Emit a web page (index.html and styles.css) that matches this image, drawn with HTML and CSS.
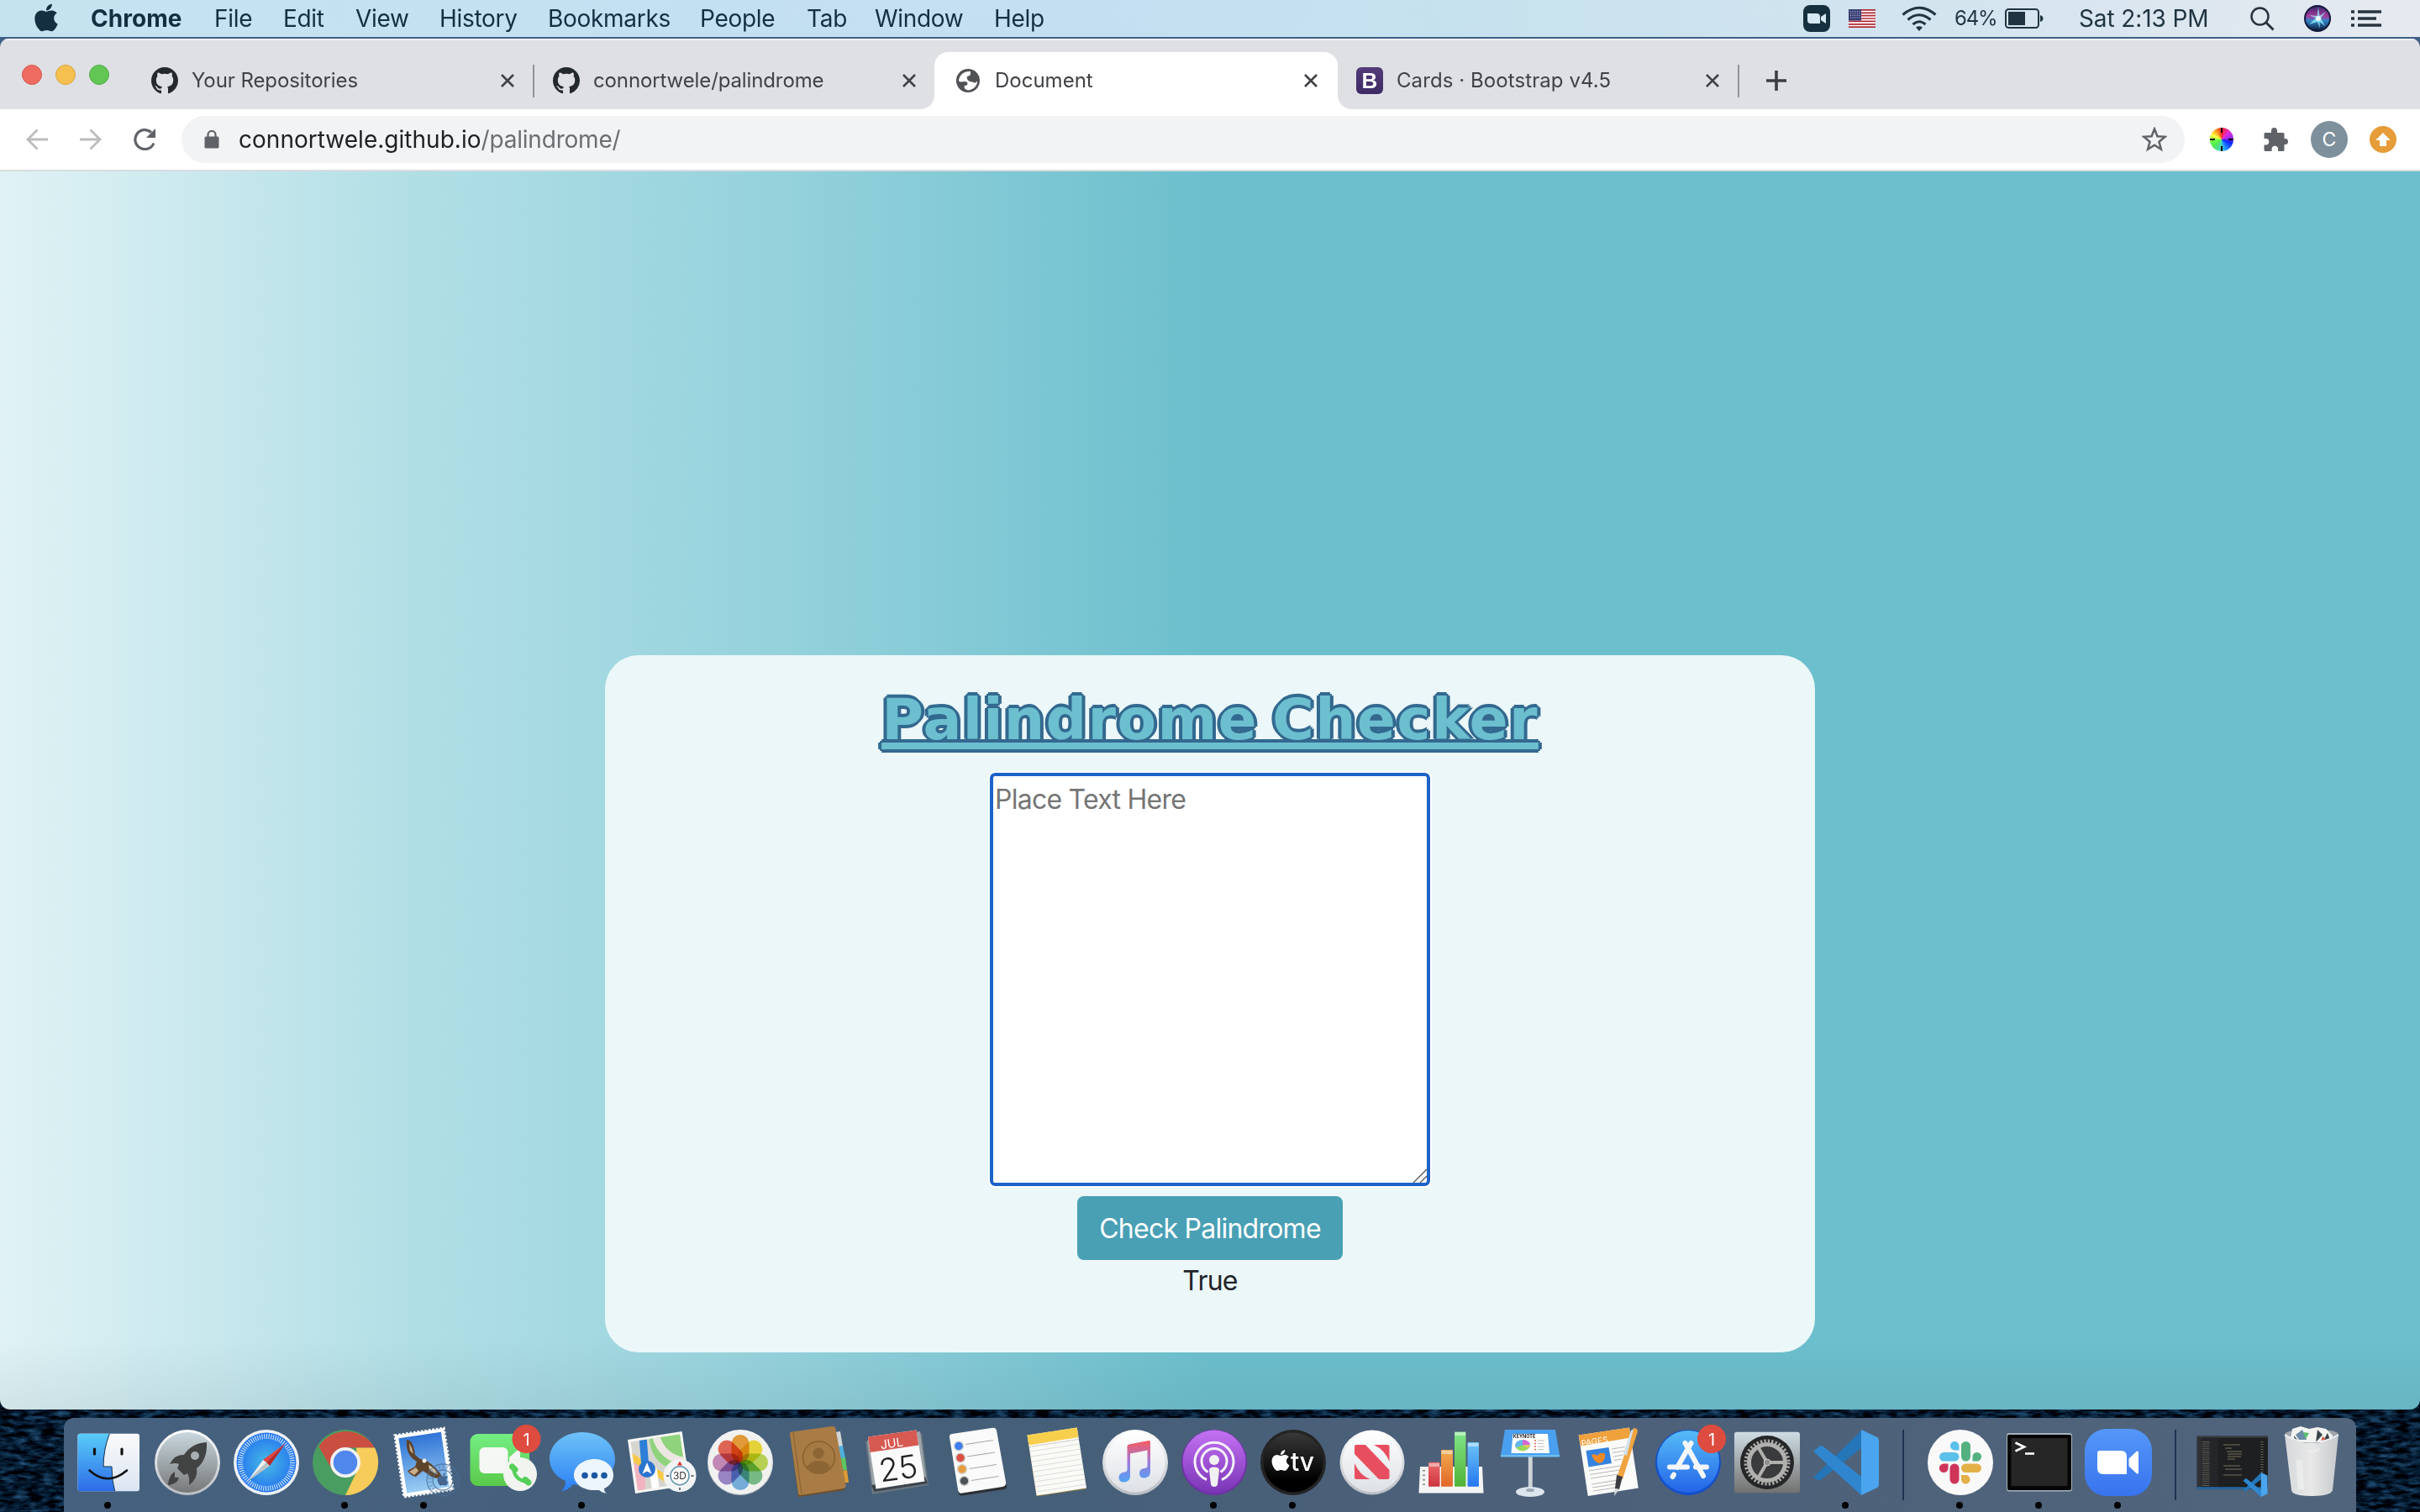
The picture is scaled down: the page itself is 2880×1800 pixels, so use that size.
FILE: index.html
```
<!DOCTYPE html>
<html lang="en">
<head>
<meta charset="utf-8">
<title>Document</title>
<link rel="stylesheet" href="styles.css">
</head>
<body>
<svg class="defs" width="0" height="0">
  <defs>
    <symbol id="apple" viewBox="0 0 170 170"><path fill="currentColor" d="M150.400 130.300c-2.500 5.700-5.400 10.900-8.700 15.700-4.600 6.500-8.300 11-11.200 13.500-4.500 4.100-9.300 6.200-14.400 6.400-3.700 0-8.100-1-13.300-3.200-5.200-2.100-9.900-3.200-14.300-3.200-4.600 0-9.500 1.100-14.800 3.200-5.300 2.100-9.500 3.300-12.800 3.400-4.900.2-9.800-2-14.700-6.500-3.100-2.700-7.100-7.400-11.800-14-5.100-7.100-9.200-15.400-12.500-24.800-3.500-10.200-5.200-20-5.200-29.600 0-10.900 2.400-20.400 7.100-28.300 3.700-6.300 8.600-11.300 14.800-14.900 6.200-3.700 12.800-5.500 20-5.700 3.900 0 9.100 1.200 15.500 3.600 6.400 2.400 10.500 3.600 12.300 3.600 1.300 0 5.900-1.400 13.600-4.200 7.300-2.600 13.400-3.700 18.400-3.300 13.600 1.100 23.800 6.500 30.600 16.100-12.200 7.400-18.200 17.700-18.100 31 .1 10.300 3.900 18.900 11.200 25.700 3.300 3.200 7 5.600 11.200 7.400-.9 2.600-1.800 5.100-2.900 7.600zM119.200 7.200c0 8.100-3 15.700-8.900 22.700-7.100 8.300-15.700 13.100-25.100 12.400-.1-1-.2-2-.2-3.100 0-7.800 3.400-16.100 9.400-22.900 3-3.400 6.800-6.300 11.400-8.600 4.600-2.200 9-3.500 13.100-3.700.1 1.100.2 2.200.2 3.200z"/></symbol>
    <symbol id="octocat" viewBox="0 0 16 16"><path fill="#24292e" d="M8 0C3.580 0 0 3.580 0 8c0 3.540 2.290 6.530 5.470 7.590.4.070.55-.17.55-.38 0-.19-.01-.82-.01-1.490-2.010.37-2.530-.49-2.690-.94-.09-.23-.48-.94-.82-1.130-.28-.15-.68-.52-.01-.53.63-.01 1.080.58 1.230.82.72 1.210 1.870.87 2.330.66.070-.52.28-.87.51-1.070-1.780-.2-3.640-.89-3.640-3.950 0-.87.31-1.590.82-2.150-.08-.2-.36-1.020.08-2.120 0 0 .67-.21 2.200.82.64-.18 1.320-.27 2-.27s1.360.09 2 .27c1.530-1.040 2.200-.82 2.200-.82.44 1.100.16 1.920.08 2.120.51.56.82 1.270.82 2.150 0 3.070-1.870 3.750-3.650 3.950.29.25.54.73.54 1.480 0 1.070-.01 1.930-.01 2.200 0 .21.15.46.55.38A8.010 8.010 0 0 0 16 8c0-4.420-3.580-8-8-8z"/></symbol>
    <symbol id="close" viewBox="0 0 18 18"><path d="M2 2 16 16M16 2 2 16" stroke="#3f4145" stroke-width="2.600" fill="none"/></symbol>
    <symbol id="code" viewBox="0 0 78 78"><path fill="#2476b9" d="M0 57 57 1V22L9 59.500Q6 61 4 59Z"/><path fill="#2f86cf" d="M0 26 7 20Q9 18 12 20L57 56V78Z"/><path fill="#4aa5ee" d="M57 0 76 9Q78 10 78 13V65Q78 68 76 69L57 78Z"/></symbol>
    <linearGradient id="white" x2="0" y2="1"><stop stop-color="#fff"/><stop offset="1" stop-color="#dde0e5"/></linearGradient>
    <linearGradient id="rim" x2="0" y2="1"><stop stop-color="#fff"/><stop offset="1" stop-color="#b8bdc3"/></linearGradient>
    <linearGradient id="blue" x2="0" y2="1"><stop stop-color="#56bcf8"/><stop offset="1" stop-color="#2364e8"/></linearGradient>
    <linearGradient id="finderL" x2="0" y2="1"><stop stop-color="#59ccf8"/><stop offset="1" stop-color="#2d6ce8"/></linearGradient>
    <linearGradient id="finderR" x2="0" y2="1"><stop stop-color="#fafafa"/><stop offset="1" stop-color="#dbe5f3"/></linearGradient>
    <linearGradient id="rocket" x2="0" y2="1"><stop stop-color="#c9d8df"/><stop offset="1" stop-color="#777878"/></linearGradient>
    <radialGradient id="compass"><stop stop-color="#48bbe6"/><stop offset="1" stop-color="#2474ef"/></radialGradient>
    <linearGradient id="green" x2="0" y2="1"><stop stop-color="#74ee84"/><stop offset="1" stop-color="#5ac949"/></linearGradient>
    <linearGradient id="msg" x2="0" y2="1"><stop stop-color="#6ec2f8"/><stop offset="1" stop-color="#2b80f5"/></linearGradient>
    <linearGradient id="note" x2="0" y2="1"><stop stop-color="#f65b60"/><stop offset=".5" stop-color="#a278d8"/><stop offset="1" stop-color="#4ea4f5"/></linearGradient>
    <linearGradient id="purple" x2="0" y2="1"><stop stop-color="#c471f3"/><stop offset="1" stop-color="#7935b5"/></linearGradient>
    <linearGradient id="black" x2="0" y2="1"><stop stop-color="#383838"/><stop offset=".8" stop-color="#000"/></linearGradient>
    <linearGradient id="metal" x2="0" y2="1"><stop stop-color="#cfdde4"/><stop offset="1" stop-color="#727170"/></linearGradient>
    <linearGradient id="sky" x2="0" y2="1"><stop stop-color="#2f74d6"/><stop offset="1" stop-color="#9bcdf3"/></linearGradient>
    <linearGradient id="zoomBg" x2="0" y2="1"><stop stop-color="#5597f9"/><stop offset="1" stop-color="#3873ee"/></linearGradient>
    <linearGradient id="bin" x2="1" y2="0"><stop stop-color="#d6d8da"/><stop offset=".5" stop-color="#e8e8e8"/><stop offset="1" stop-color="#c5c8cb"/></linearGradient>
    <linearGradient id="barR" x2="0" y2="1"><stop stop-color="#ea6a6a"/><stop offset="1" stop-color="#cd3440"/></linearGradient>
    <linearGradient id="barO" x2="0" y2="1"><stop stop-color="#f0ab4e"/><stop offset="1" stop-color="#e2672a"/></linearGradient>
    <linearGradient id="barG" x2="0" y2="1"><stop stop-color="#7fe58a"/><stop offset="1" stop-color="#51b335"/></linearGradient>
    <linearGradient id="barB" x2="0" y2="1"><stop stop-color="#6cc5f8"/><stop offset="1" stop-color="#2577ef"/></linearGradient>
    <linearGradient id="siri" x2="0" y2="1"><stop stop-color="#3b2a6e"/><stop offset=".4" stop-color="#a83a9c"/><stop offset=".6" stop-color="#2f86c8"/><stop offset="1" stop-color="#0f1a3c"/></linearGradient>
  </defs>
</svg>

<header class="menubar">
  <nav class="menus">
    <svg class="apple"><use href="#apple"/></svg>
    <b>Chrome</b><span>File</span><span>Edit</span><span>View</span><span>History</span><span>Bookmarks</span><span>People</span><span>Tab</span><span>Window</span><span>Help</span>
  </nav>
  <div class="status">
    <svg class="s-zoom" width="32" height="32" viewBox="0 0 32 32"><rect width="32" height="32" rx="8" fill="#17303f"/><path fill="#d6e8f1" d="M5 10h11q4 0 4 4v8H9q-4 0-4-4zM21 14l6-4v12l-6-4z"/></svg>
    <svg class="s-flag" width="32" height="22" viewBox="0 0 32 22"><path fill="#fff" d="M0 0h32v22H0z"/><path stroke="#b02a33" stroke-width="1.700" d="M0 .9h32M0 4.300h32M0 7.700h32M0 11h32M0 14.400h32M0 17.800h32M0 21.100h32"/><path fill="#3a3f74" d="M0 0h15v13.500H0z"/><path stroke="#c3c6dc" stroke-width="1" stroke-dasharray="1 1.600" d="M2 2.500h12M2 5h12M2 7.500h12M2 10h12"/></svg>
    <svg class="s-wifi" width="42" height="30" viewBox="0 0 42 30" fill="none" stroke="#1f3440" stroke-width="3"><path d="M1.500 10.500Q21-6 40.500 10.500M7.500 16.500Q21 5 34.500 16.500M13.500 22Q21 15.500 28.500 22"/><path fill="#1f3440" stroke="none" d="M17 25.500q4-2.500 8 0l-4 4.500z"/></svg>
    <span class="s-pct">64%</span>
    <svg class="s-bat" width="46" height="24" viewBox="0 0 46 24"><rect x="1" y="1" width="39" height="22" rx="3.500" fill="none" stroke="#1f3440" stroke-width="2"/><path fill="#1f3440" d="M4 4h20v16H4zM42 8q3.500 1 3.500 4T42 16z"/></svg>
    <span class="s-time">Sat 2:13 PM</span>
    <svg class="s-search" width="29" height="29" viewBox="0 0 29 29" fill="none" stroke="#27333e" stroke-width="2.500"><circle cx="11.500" cy="11.500" r="10"/><path d="M18.500 18.500 27.500 27.500" stroke-width="3"/></svg>
    <svg class="s-siri" width="32" height="32" viewBox="0 0 32 32"><circle cx="16" cy="16" r="16" fill="#10183a"/><circle cx="16" cy="16" r="14" fill="url(#siri)"/><path d="M17 2 18.500 13 26 8 20 15.500 25 25 18.500 20 19 28 16 20 6 23 14 15.500 6 12 15.500 13Z" fill="#8fe9f2" opacity=".8"/><circle cx="17" cy="16" r="3" fill="#e6fbff"/></svg>
    <svg class="s-list" width="36" height="20" viewBox="0 0 36 20" stroke="#27333e" stroke-width="3.600"><path d="M0 2h4M8 2h28M0 10h4M8 10h22M0 18h4M8 18h28"/></svg>
  </div>
</header>

<main class="window">
  <div class="tabstrip">
    <div class="lights"><i class="red"></i><i class="amber"></i><i class="lime"></i></div>
    <div class="tab first"><svg width="32" height="32"><use href="#octocat"/></svg><span class="t1">Your Repositories</span><svg class="x" width="18" height="18"><use href="#close"/></svg></div>
    <div class="tab second"><svg width="32" height="32"><use href="#octocat"/></svg><span class="t2">connortwele/palindrome</span><svg class="x" width="18" height="18"><use href="#close"/></svg></div>
    <div class="tab active"><svg width="28" height="28" viewBox="0 0 28 28"><circle cx="14" cy="14" r="14" fill="#505256"/><path fill="#fff" d="M17 3C9 2 3 8 3 14.500L5 15.500 11 15q2.500.5 2.500 2.500T10 20l-.5 2q1 3 5 3.500C20 25 25.500 20 25 14.500q-2 3-4.500 1.500L15 14.500q-3-2.500-2-5.500l3-1q1.500-2 1-5z"/></svg><span class="t3">Document</span><svg class="x" width="18" height="18"><use href="#close"/></svg></div>
    <div class="tab last"><span class="boot">B</span><span class="t4">Cards · Bootstrap v4.5</span><svg class="x" width="18" height="18"><use href="#close"/></svg></div>
    <svg class="plus" width="24" height="24" viewBox="0 0 24 24"><path d="M12 0v24M0 12h24" stroke="#3c3e42" stroke-width="3.600"/></svg>
  </div>
  <div class="toolbar">
    <svg width="26" height="26" viewBox="0 0 26 26" fill="none" stroke="#babcbe" stroke-width="2.800"><path d="M26 13H2M13.500 1.500 2 13 13.500 24.500"/></svg>
    <svg class="fwd" width="26" height="26" viewBox="0 0 26 26" fill="none" stroke="#babcbe" stroke-width="2.800"><path d="M0 13h24M12.500 1.500 24 13 12.500 24.500"/></svg>
    <svg class="reload" width="28" height="26" viewBox="0 0 28 26"><path d="M25 17.500A11.500 11.500 0 1 1 22 4.500" fill="none" stroke="#5f6368" stroke-width="3.200"/><path fill="#5f6368" d="M27 0v11H16z"/></svg>
    <div class="omnibox">
      <svg width="18" height="22" viewBox="0 0 18 22"><path fill="#5f6368" d="M2 7.500h14q1.500 0 1.500 1.500v11q0 1.500-1.500 1.500H2Q.5 21.500.5 20V9Q.5 7.500 2 7.500z"/><path d="M4.500 8V5.500a4.500 4.500 0 0 1 9 0V8" fill="none" stroke="#5f6368" stroke-width="2.200"/></svg>
      <span class="url">connortwele.github.io<em>/palindrome/</em></span>
      <svg class="star" width="30" height="30" viewBox="0 0 30 30"><path d="M15 2.500 18.400 11.300 27.700 11.800 20.500 17.700 22.900 26.800 15 21.700 7.100 26.800 9.500 17.700 2.300 11.800 11.600 11.300Z" fill="none" stroke="#5f6368" stroke-width="2.500"/></svg>
    </div>
    <div class="wheel"></div>
    <svg class="puzzle" width="30" height="30" viewBox="0 0 30 30"><path fill="#5f6368" d="M2 7h8V4.500a3.500 3.500 0 0 1 7 0V7h7q1.500 0 1.500 1.500V14h1a3.500 3.500 0 0 1 0 7h-1v6.500q0 1.500-1.500 1.500h-6v-2.500a3.700 3.700 0 0 0-7.400 0V29H3q-1.500 0-1.500-1.500v-6h2a3.500 3.500 0 0 0 0-7.500h-2V8.500Z"/></svg>
    <span class="avatar">C</span>
    <svg class="up" width="32" height="32" viewBox="0 0 32 32"><circle cx="16" cy="16" r="16" fill="#e69c38"/><path fill="#fff" d="M16 8l9 9h-5v7h-8v-7H7z"/></svg>
  </div>
  <section class="page">
    <div class="card">
      <h1>Palindrome Checker</h1>
      <div class="field"><span>Place Text Here</span><svg width="18" height="18" viewBox="0 0 18 18"><path d="M2 18 18 2M10 18 18 10" stroke="#555" stroke-width="1.300"/></svg></div>
      <div class="btn">Check Palindrome</div>
      <p>True</p>
    </div>
  </section>
</main>

<div class="desktop">
  <svg class="sea" width="2880" height="134"><filter id="waves" x="0" y="0" width="1" height="1" color-interpolation-filters="sRGB"><feTurbulence type="fractalNoise" baseFrequency=".06 .2" numOctaves="4" seed="4"/><feColorMatrix values="0.35 0 0 0 -.16  0.6 0 0 0 -.2  0.8 0 0 0 -.22  0 0 0 0 1"/></filter><rect width="2880" height="134" filter="url(#waves)"/></svg>
  <footer class="dock">
    <svg viewBox="0 0 94 112"><rect x="10.500" y="18.700" width="73.500" height="68.500" rx="3" fill="url(#finderR)"/><path fill="url(#finderL)" d="M48.300 18.700Q41 38 41 58h10q0 16 3.600 29.200H13.500q-3 0-3-3V21.700q0-3 3-3z"/><path d="M48.300 18.700Q41 38 41 58h10q0 16 3.600 29" fill="none" stroke="#12304c" stroke-width="1"/><path d="M30.500 37v6M63 37v6" stroke="#111" stroke-width="3.200" stroke-linecap="round"/><path d="M24.500 62.500Q46 82 69 62.500" fill="none" stroke="#111" stroke-width="2.600" stroke-linecap="round"/><circle class="dot" cx="46" cy="104" r="4"/></svg>
    <svg viewBox="0 0 94 112"><circle cx="47" cy="53" r="39" fill="url(#rim)"/><circle cx="47" cy="53" r="36" fill="url(#rocket)"/><path fill="#424343" d="M70 29Q52 30 43 44q-11-1-17 11 7-2 11 0l-2 5 8 8 4-2q3 4 2 14 11-8 9-20 13-10 12-31z"/><path fill="#424343" d="M32 64q-7 4-8 16 11-1 13-9l-5 0z"/><circle cx="56" cy="45" r="5" fill="#a8b0b4"/></svg>
    <svg viewBox="0 0 94 112"><circle cx="47" cy="53" r="39" fill="#eef1f4"/><circle cx="47" cy="53" r="35.500" fill="url(#compass)"/><circle cx="47" cy="53" r="31" fill="none" stroke="#d8ecfb" stroke-width="6" stroke-dasharray="1 1.700"/><path fill="#e8453c" d="M70 30 43 50 47 53Z"/><path fill="#b92a28" d="M70 30 47 53 51 57Z"/><path fill="#f0f0f0" d="M24 76 43 50 47 53Z"/><path fill="#c0c3c6" d="M24 76 47 53 51 57Z"/></svg>
    <svg viewBox="0 0 94 112"><circle cx="47" cy="53" r="39" fill="#4a9d60"/><path fill="#ca4f41" d="M15.300 34A39 39 0 0 1 82 35.500H47L32 63Z"/><path fill="#f7cc5a" d="M82 35.500A39 39 0 0 1 47 92L62 61 60 35.500Z"/><circle cx="47" cy="53" r="18" fill="#f3f3f3"/><circle cx="47" cy="53" r="14.300" fill="#4f87ed"/><circle class="dot" cx="46" cy="104" r="4"/></svg>
    <svg viewBox="0 0 94 112"><g transform="rotate(-8.500 47 53)"><rect x="17" y="16" width="59" height="74" fill="#fff"/><rect x="17" y="16" width="59" height="74" fill="none" stroke="#fff" stroke-width="3" stroke-dasharray="2.500 2"/><rect x="21" y="20" width="51" height="66" fill="url(#sky)"/></g><path fill="#5f442c" d="M26 26Q34 26 36 44L42 49 48 50Q62 58 69 71 58 74 50 66L45 63 37 70Q31 69 27 63L36 58 38 52Q24 44 26 26z"/><path fill="#c9b08c" d="M29 30q4 6 5 13l-4-4zM29 64l8-5 3 4-5 5z"/><path fill="#d9c9ac" d="M52 56q7 3 11 11-6-1-10-6z"/><circle cx="47" cy="51" r="2.500" fill="#f1eee6"/><g fill="none" stroke="#4a6d96" stroke-width="1.300" opacity=".75"><circle cx="69" cy="74" r="19"/><circle cx="69" cy="74" r="12"/></g><circle cx="69" cy="74" r="15.500" fill="none" stroke="#4a6d96" stroke-width="4" stroke-dasharray="2 2.500" opacity=".4"/><svg x="61" y="64" width="16" height="18" color="#45678f"><use href="#apple"/></svg><circle class="dot" cx="46" cy="104" r="4"/></svg>
    <svg viewBox="0 0 94 112"><rect x="7.500" y="19" width="70.500" height="62" rx="9" fill="url(#green)"/><rect x="18.500" y="35" width="34" height="31" rx="6" fill="#f4f7f3"/><path fill="#f4f7f3" d="M54 47 63 39q4-2 4 2v20L54 58z"/><circle cx="67" cy="67" r="20" fill="#f1f4ef"/><path d="M59 59q1 15 16 17" fill="none" stroke="#55cf58" stroke-width="4"/><path d="M57.500 58 61 61.500M73 73.500 77 77" stroke="#55cf58" stroke-width="7" stroke-linecap="round"/><circle cx="74.500" cy="25" r="17" fill="#de4b3f"/><text x="74.500" y="32.500" font-size="20" fill="#fff">1</text></svg>
    <svg viewBox="0 0 94 112"><path fill="url(#msg)" d="M47 17C69 17 86 31 86 49S69 80 47 80q-6 0-11-1-5 7-14 8 5-4 5-12C15 70 8 60 8 49 8 31 25 17 47 17z"/><path fill="#edf5fd" d="M61 49c13 0 23 8 23 19 0 7-4 13-11 16 0 3 1 5 3 6-4-1-7-2-9-4h-6C47 86 37 78 37 68s11-19 24-19z"/><g fill="#1c58a2"><circle cx="50" cy="68.500" r="3.800"/><circle cx="61.500" cy="68.500" r="3.800"/><circle cx="73" cy="68.500" r="3.800"/></g><circle class="dot" cx="46" cy="104" r="4"/></svg>
    <svg viewBox="0 0 94 112"><path fill="#f7f7f4" d="M7 26 71.600 16 81 80 16 90Z"/><clipPath id="mapClip"><path d="M10.500 28.500 69 19.500 77.500 77.500 19 86.500Z"/></clipPath><g clip-path="url(#mapClip)"><rect width="94" height="112" fill="#d6d5cf"/><path fill="#8fd37c" d="M32 18H75V60H60Q34 55 32 18z"/><path d="M40 20Q48 50 80 52" fill="none" stroke="#ece8e1" stroke-width="9"/><path fill="#f2b3c0" d="M8 50 28 60V90H12z"/><path d="M8 44 68 82" stroke="#f8c948" stroke-width="8"/><path d="M37 60 41 90" stroke="#fff" stroke-width="9"/><path d="M25 22 28 60" stroke="#2d7ed6" stroke-width="9"/></g><circle cx="30" cy="61" r="10" fill="#2c73cf"/><path fill="#fff" d="M30 53 35.500 66.500 30 63.500 24.500 66.500Z"/><circle cx="69" cy="68.700" r="19.500" fill="#f1f3f5"/><circle cx="69" cy="68.700" r="11" fill="#fff" stroke="#5e93ac" stroke-width="1.500"/><path fill="#df3029" d="M69 51.500 72 56.500H66Z"/><path d="M69 83v3M53 69h3M82.500 69h3" stroke="#444" stroke-width="1.500"/><text x="69" y="73" font-size="12" fill="#333">3D</text></svg>
    <svg viewBox="0 0 94 112"><circle cx="47" cy="53" r="39" fill="url(#rim)"/><circle cx="47" cy="53" r="38" fill="#f1f1f0"/><g class="petals"><rect x="36.500" y="20" width="21" height="33" rx="10.500" fill="#f0a23c"/><rect x="36.500" y="20" width="21" height="33" rx="10.500" fill="#f1e03c" transform="rotate(45 47 53)"/><rect x="36.500" y="20" width="21" height="33" rx="10.500" fill="#c0dc58" transform="rotate(90 47 53)"/><rect x="36.500" y="20" width="21" height="33" rx="10.500" fill="#7dc48c" transform="rotate(135 47 53)"/><rect x="36.500" y="20" width="21" height="33" rx="10.500" fill="#7cb6e6" transform="rotate(180 47 53)"/><rect x="36.500" y="20" width="21" height="33" rx="10.500" fill="#a08ccd" transform="rotate(225 47 53)"/><rect x="36.500" y="20" width="21" height="33" rx="10.500" fill="#ce8fc0" transform="rotate(270 47 53)"/><rect x="36.500" y="20" width="21" height="33" rx="10.500" fill="#ea6a57" transform="rotate(315 47 53)"/></g></svg>
    <svg viewBox="0 0 94 112"><path fill="#d2d5d6" d="M66 17 72 16 75 34H68z"/><path fill="#4eb1dd" d="M69 34 75 33 78 48H70z"/><path fill="#5dc760" d="M70 49 78 47 80 62H72z"/><path fill="#dc9b33" d="M73 63 80 62 82 77H75z"/><path fill="#6f4f27" d="M12 18 22 94 77 86V80z"/><path fill="#a97c45" d="M12 19Q12 16.500 14.500 16.500L62 10q4-.5 4.500 3L78.500 80q.5 3.500-3 4L25 92q-2.500.5-3-2z"/><path d="M16 17 26 91" stroke="#8c6435" stroke-width="1.200"/><circle cx="46.500" cy="47" r="19" fill="#a67a43" stroke="#86602f" stroke-width="1.400"/><circle cx="46" cy="42" r="6.500" fill="#8c6534"/><path fill="#8c6534" d="M32 59q4-8 14-8t14 7q-6 8-13 8t-15-7z"/></svg>
    <svg viewBox="0 0 94 112"><path fill="#68757e" d="M8 28 16 91 83 80 75 18z"/><path fill="#9aa5aa" d="M10 27 17 88 81 77 73 16z"/><path fill="#3c434a" d="M15 80 18 88 82 78 79 70z"/><path fill="#fafafa" d="M11 22.600 68.600 14.600 78.500 75.500 20.500 84.500Z"/><path fill="#d65a52" d="M11 22.600 68.600 14.600 71.200 32.500 13.500 41Z"/><g transform="rotate(-8 43 50)"><text x="42" y="35" font-size="14.500" fill="#fff">JUL</text><text x="45.500" y="74" font-size="38" font-weight="300" fill="#222">25</text></g></svg>
    <svg viewBox="0 0 94 112"><path fill="#2c2f33" d="M15 26 25 90Q26 93 29 92.500L79 85Q83 84 82 80z"/><path fill="#fafafa" d="M14 23q-.5-3.500 3-4L64 12q5-1 6 3l11 61q1 5-4 6L29 89.500q-4 1-5-4z"/><g stroke="#a5a5a5" stroke-width="1"><path d="M33 31.500 66 26.500M35 46 68 41M37.500 60.500 70 55.500M40 74.500 72.500 69.500"/></g><g stroke="#d4d4d4" stroke-width="1.500"><circle cx="25" cy="33.500" r="5.500" fill="#3d7df0"/><circle cx="27" cy="47.500" r="5.500" fill="#db4f43"/><circle cx="29" cy="61" r="5.500" fill="#e79d3e"/><circle cx="31.500" cy="75" r="5.500" fill="#4f5358"/></g></svg>
    <svg viewBox="0 0 94 112"><path fill="#8b7a3c" d="M13 24 23.500 93.500 83.500 84.500z"/><path fill="#fafaf6" d="M12.500 20.600 71.700 11.400 83 83.600 23.600 92.600Z"/><path fill="#f8cf4d" d="M12.500 20.600 71.700 11.400 73.500 23 14.500 32.500Z"/><path d="M15 34.500 73.500 25.500" stroke="#999" stroke-width=".7" stroke-dasharray="2 1"/><path d="M16 40 75 31M17 46 76 37M18 52 77 43M18.500 58 78 49M19.500 64 79 55M20.500 70 80 61M21.500 76 80.500 67M22 82 81.500 73M23 88 82.500 79" stroke="#d0d0d0" stroke-width=".7"/></svg>
    <svg viewBox="0 0 94 112"><circle cx="47" cy="53" r="39" fill="url(#rim)"/><circle cx="47" cy="53" r="35.500" fill="url(#white)"/><path fill="url(#note)" d="M37.500 34q0-2 2-2.500L63 27q2-.3 2 2v35q0 7-7 7.500-6 0-6-5.500t6-6q3.500-.5 3.500-3V38.500L41 42.500V69q0 7-7 7.500-6.500 0-6.500-5.500t6.500-6.500q3.500-.5 3.500-3z"/></svg>
    <svg viewBox="0 0 94 112"><circle cx="47" cy="53" r="39" fill="#7130a8"/><circle cx="47" cy="52" r="37.500" fill="url(#purple)"/><g fill="none" stroke="#f5f0f9" stroke-width="3"><path d="M38 73.500A23 23 0 1 1 56 73.500"/><path d="M39.500 64.500A15 15 0 1 1 54.500 64.500"/></g><circle cx="47" cy="50" r="6" fill="#f1f1f1"/><path fill="#f1f1f1" d="M41 62q0-3.500 6-3.500t6 3.500l-2 17q-.5 3-4 3t-4-3z"/><circle class="dot" cx="46" cy="104" r="4"/></svg>
    <svg viewBox="0 0 94 112"><circle cx="47" cy="53" r="39" fill="#242424"/><circle cx="47" cy="53" r="35.500" fill="url(#black)"/><svg x="19" y="37" width="26" height="27" color="#fff"><use href="#apple"/></svg><text x="58" y="63" font-size="30" font-weight="500" fill="#fff">tv</text><circle class="dot" cx="46" cy="104" r="4"/></svg>
    <svg viewBox="0 0 94 112"><circle cx="47" cy="53" r="38.500" fill="url(#rim)"/><circle cx="47" cy="53" r="35.500" fill="url(#white)"/><path fill="#e74f60" d="M26 34q0-2 2-2H39L67.500 62V71q0 2-2 2H55L26 43zM49 32H65.500q2 0 2 2V52Q62 38 49 32zM26 54Q32 68 44.500 73H28q-2 0-2-2z"/></svg>
    <svg viewBox="0 0 94 112"><path fill="#f4f4f4" d="M10 58H84L85.500 89.500H8.500Z"/><path d="M14.500 62v22" stroke="#888" stroke-width="3" stroke-dasharray="1.500 4"/><rect x="20" y="52.700" width="13.500" height="29" rx="1" fill="url(#barR)"/><rect x="35" y="38" width="14" height="43.700" rx="1" fill="url(#barO)"/><rect x="51" y="16.500" width="13.500" height="65.200" rx="1" fill="url(#barG)"/><rect x="66.500" y="29" width="13.500" height="52.700" rx="1" fill="url(#barB)"/><path d="M20.500 56h12.500M35.500 41h13M51.500 19h12.500M67 32h12.500" stroke="#fff" stroke-opacity=".45" stroke-width="4"/></svg>
    <svg viewBox="0 0 94 112"><path fill="#cdd3d8" d="M44.800 46h5v40h-5z"/><ellipse cx="47" cy="88" rx="17" ry="6" fill="#dce5ee"/><ellipse cx="47" cy="86" rx="5" ry="2" fill="#9ba7b4"/><path fill="#4a9fee" d="M17 14H77L82 44H12Z"/><path fill="#6dc0f3" d="M12 44H82V46.500H12Z"/><path fill="#fff" d="M26.500 19H68L70 42H24.500Z"/><text x="40" y="24" font-size="5.500" font-weight="700" fill="#222">KEYNOTE</text><ellipse cx="38" cy="32.500" rx="9" ry="6.500" fill="#64b7ec"/><path fill="#9ad95a" d="M38 32.500 30 35.500Q38 43 45 36z"/><path fill="#d867d2" d="M38 32.500V26Q46 26.500 47 31.500z"/><path fill="#f2c94a" d="M38 32.500 47 32 45 36z"/><path d="M52 27h2M52 30.500h2M52 34h2M52 37.500h2" stroke="#e06a58" stroke-width="1.500"/><path d="M56 27h8M56 30.500h7M56 34h8M56 37.500h7" stroke="#bbb" stroke-width="1"/></svg>
    <svg viewBox="0 0 94 112"><path fill="#fbfbfa" d="M10.700 20.600 71 11.400 81.800 83.600 21.800 93Z"/><path fill="#efa13c" d="M10.700 20.600 71 11.400 72.800 23.500 13 33.500Z"/><g transform="rotate(-8.500 30 27)"><text x="29.500" y="31.500" font-size="10" fill="#fff">PAGES</text></g><path fill="#3583e0" d="M19.500 39 46.500 35 50 54 22.500 58.500Z"/><path fill="#f18a24" d="M26 44q4-2 7 1 3-4 6-3 4-1 3 4-1 7-7 8-6-2-9-10z"/><path d="M50 37 66 34.500M51 41.500 66 39M52 46 64 44M53 50.500 62 49M23 63 60 57M24 67.500 59 62M25 72 58 67M26 79 57 74M27 83 56 78.500M28 87 54 83" stroke="#b0b0b0" stroke-width=".9"/><path fill="#f0a33f" d="M76 12q5 0 5 4L63 73 56 71Z"/><path fill="#cfe0ea" d="M73 15 76 13 68 45 64 43z"/><path fill="#3b3d40" d="M56 68 63 70 59 85 54 84z"/><path fill="#d5d7da" d="M54 84 59 85 53 93z"/></svg>
    <svg viewBox="0 0 94 112"><circle cx="47" cy="53" r="39" fill="#1450cc"/><circle cx="47" cy="52" r="37" fill="url(#blue)"/><g stroke="#f3f6fa" stroke-width="6" stroke-linecap="round"><path d="M50.500 30 34 59M43.500 30 65 69M25 58.500H46M56 58.500H69M30 67.500 28.500 70"/></g><circle cx="75" cy="25" r="17" fill="#de4b3f"/><text x="75" y="32.500" font-size="20" fill="#fff">1</text></svg>
    <svg viewBox="0 0 94 112"><rect x="8" y="16.700" width="78" height="72.500" rx="3" fill="url(#metal)"/><circle cx="47" cy="53" r="32" fill="#242628"/><circle cx="47" cy="53" r="25.500" fill="none" stroke="#a9a9a7" stroke-width="4" stroke-dasharray="2.400 2.050"/><circle cx="47" cy="53" r="21.500" fill="#3a3b3c" stroke="#b0b0ae" stroke-width="5"/><path d="M47 53H67M47 53 37 36M47 53 37 70" stroke="#b0b0ae" stroke-width="4"/><circle cx="47" cy="53" r="4" fill="#8f8f8e" stroke="#d0d0d0"/></svg>
    <svg viewBox="0 0 94 112"><use href="#code" x="8" y="14" width="78" height="78"/><circle class="dot" cx="46" cy="104" r="4"/></svg>
    <i class="rule"></i>
    <svg viewBox="0 0 94 112"><circle cx="47" cy="53" r="39" fill="#f9f9f9"/><g fill="#5bc0ea"><rect x="22" y="41" width="23.500" height="10.500" rx="5.250"/><path d="M45.500 38.500H39.500a5.300 5.300 0 1 1 6-5.300z"/></g><g fill="#54b080"><rect x="48" y="28" width="11" height="23.500" rx="5.500"/><path d="M61.500 51.500V46a5.300 5.300 0 1 1 5.300 5.500z"/></g><g fill="#cf3459"><rect x="34.500" y="54.500" width="11" height="24" rx="5.500"/><path d="M32.500 54.500V60a5.300 5.300 0 1 1-5.300-5.500z"/></g><g fill="#e3b048"><rect x="48" y="54.500" width="24" height="10.500" rx="5.250"/><path d="M48 68H54a5.300 5.300 0 1 1-6 5.300z"/></g><circle class="dot" cx="46" cy="104" r="4"/></svg>
    <svg viewBox="0 0 94 112"><rect x="8" y="18" width="78" height="69.500" rx="3" fill="#a6b2b8"/><rect x="9" y="20" width="76" height="66" rx="2" fill="#050505"/><rect x="13.500" y="24" width="67" height="57" fill="#262626"/><path d="M18.500 29.500 29 34.500 18.500 39.500" fill="none" stroke="#fff" stroke-width="2.600"/><path d="M30 42.500H41" stroke="#fff" stroke-width="2.600"/><circle class="dot" cx="46" cy="104" r="4"/></svg>
    <svg viewBox="0 0 94 112"><rect x="7" y="13" width="80" height="80" rx="26" fill="url(#zoomBg)"/><path fill="#fff" d="M25 39H50q7 0 7 7V67H29q-7 0-7-7V42q0-3 3-3zM59.500 48.500 68.500 40q2.500-1.500 2.500 1V65q0 2.500-2.500 1L59.500 57.500z"/><circle class="dot" cx="46" cy="104" r="4"/></svg>
    <i class="rule"></i>
    <svg viewBox="0 0 94 112"><rect x="4.700" y="21.700" width="84.300" height="63" fill="#1e1f21"/><rect x="4.700" y="21.700" width="84.300" height="2" fill="#3a3c3f"/><rect x="4.700" y="23.700" width="5" height="59" fill="#303236"/><rect x="9.700" y="23.700" width="20" height="59" fill="#252629"/><rect x="4.700" y="82.500" width="84.300" height="2" fill="#2179c4"/><path d="M15 28v54" stroke="#77736a" stroke-width="9" stroke-dasharray="1 1.600" opacity=".7"/><path d="M36 32h20M38 36h8M40 40h18M41 43h17M41 46h16M41 49h9M36 57h20M38 61h20M36 68h22" stroke="#76715a" stroke-width="1"/><path d="M82 28v46" stroke="#696859" stroke-width="3" stroke-dasharray="1 2"/><use href="#code" x="59" y="65" width="30" height="29"/></svg>
    <svg viewBox="0 0 94 112"><ellipse cx="47" cy="20" rx="32" ry="7" fill="#9fa6ac"/><path fill="#f3f3f1" d="M22 24 24 13 34 10 44 13 54 11 64 13 72 21 70 29H27z"/><path fill="#6c8ba8" d="M28 20 36 14 41 26H32z"/><path fill="#55c06a" d="M37 17 44 18 40 25z"/><path fill="#39434c" d="M54 14 60 20 52 29zM66 18 69 26 61 27zM26 21 31 27 27 28z"/><path fill="#d35f44" d="M60 22 64 25 58 28z"/><path fill="url(#bin)" d="M15 20Q30 30 47 30T79 20L72 86Q70 93 47 93T23 86Z"/><path fill="#fff" opacity=".35" d="M37 35q10 8 20 0-5 13-20 0zM28 50h8l2 35h-7z"/><path d="M15 20Q30 29 47 29T79 20" fill="none" stroke="#eef0f1" stroke-width="1.500"/></svg>
  </footer>
</div>
</body>
</html>
```
FILE: styles.css
```
* { box-sizing: border-box; }
body { margin: 0; width: 2880px; height: 1800px; overflow: hidden; display: flex; flex-direction: column; background: #3f6084; font-family: Inter, "Liberation Sans", sans-serif; }
svg { display: block; flex: none; }
.defs { position: absolute; }

.menubar { height: 44px; flex: none; display: flex; justify-content: space-between; background: linear-gradient(90deg, #c5e3ef 0%, #c3e0f2 30%, #c4dff1 45%, #c7e2ee 62%, #d3e4ef 80%, #e6eaf0 100%); color: #132f40; font-size: 28px; line-height: 44px; letter-spacing: -.3px; white-space: nowrap; }
.menus { display: grid; padding-left: 38px; grid-template-columns: 70px 147px 82px 86px 100px 129px 181px 127px 81px 142px 80px; }
.menus b { letter-spacing: .05px; }
.apple { width: 34px; height: 34px; margin: 4px 0 0; }
.status { display: flex; align-items: center; color: #1f3440; padding-right: 46px; }
.s-flag { margin-left: 22px; }
.s-wifi { margin-left: 31px; }
.s-pct { font-size: 24px; width: 60px; margin-left: 21px; letter-spacing: -1.200px; }
.s-time { margin: 0 0 0 42px; width: 204px; letter-spacing: -.1px; }
.s-siri { margin-left: 35px; }
.s-list { margin-left: 24px; }

.window { height: 1632px; margin-top: 2px; flex: none; display: flex; flex-direction: column; border-radius: 10px 10px 12px 12px; overflow: hidden; position: relative; z-index: 1; }
.tabstrip { height: 84px; flex: none; display: flex; background: #dfe0e4; border-top: 2px solid #f0f1f3; font-size: 24px; color: #404246; }
.lights { display: flex; gap: 16px; padding: 29px 0 0 26px; width: 164px; }
.lights i { width: 24px; height: 24px; border-radius: 50%; }
.red { background: #ed6b60; border: 1px solid #d8564c; }
.amber { background: #f5c04f; border: 1px solid #dba43c; }
.lime { background: #62c655; border: 1px solid #4eab42; }
.tab { display: flex; align-items: center; height: 68px; margin-top: 14px; position: relative; white-space: nowrap; }
.tab span { line-height: 30px; }
.tab .x { margin-left: auto; }
.first { width: 472px; padding: 0 23px 0 16px; }
.second { width: 476px; padding: 0 21px 0 22px; }
.first::after, .last::after { content: ""; position: absolute; right: 0; top: 15px; width: 2px; height: 39px; background: #919397; }
.t1 { margin-left: 16px; letter-spacing: -.08px; }
.t2 { margin-left: 16px; letter-spacing: -.12px; }
.t3 { margin-left: 18px; }
.t4 { margin-left: 16px; letter-spacing: .08px; }
.active { width: 480px; background: #fff; border-radius: 16px 16px 0 0; padding: 0 23px 0 26px; }
.active::before, .active::after { content: ""; position: absolute; bottom: 0; width: 16px; height: 16px; background: radial-gradient(circle at 0 0, transparent 15.500px, #fff 16px); }
.active::before { left: -16px; }
.active::after { right: -16px; transform: scaleX(-1); }
.last { width: 478px; padding: 0 23px 0 22px; }
.boot { width: 32px; height: 32px; border-radius: 6px; background: linear-gradient(#543b79, #3c2a63); color: #fff; font: 700 26px/32px "Liberation Sans", sans-serif; text-align: center; }
.tab .boot { line-height: 32px; }
.plus { margin: 36px 0 0 32px; }

.toolbar { height: 74px; flex: none; display: flex; align-items: center; background: #fff; padding: 0 28px 0 31px; border-bottom: 2px solid #dadcde; }
.fwd { margin-left: 38px; }
.reload { margin-left: 37px; }
.omnibox { width: 2384px; height: 56px; border-radius: 28px; background: #f1f3f4; margin-left: 30px; padding: 0 21px 0 27px; display: flex; align-items: center; }
.url { margin-left: 23px; font-size: 28px; color: #202124; letter-spacing: .02px; }
.url em { font-style: normal; color: #6b6e72; letter-spacing: -.2px; }
.star { margin-left: auto; }
.wheel { width: 28px; height: 28px; margin-left: 30px; border-radius: 50%; background: linear-gradient(#000, #000) 50% 0 / 2px 6px no-repeat, linear-gradient(#000, #000) 50% 100% / 2px 6px no-repeat, linear-gradient(#000, #000) 0 50% / 6px 2px no-repeat, linear-gradient(#000, #000) 100% 50% / 6px 2px no-repeat, conic-gradient(#f22 0, #e02bdc 45deg, #9b2bea 80deg, #12f 110deg, #29f 160deg, #4fd8c8 185deg, #4fe85a 225deg, #6f4 260deg, #ff4 295deg, #f92 330deg, #f22 360deg); }
.puzzle { margin-left: 35px; }
.avatar { width: 44px; height: 44px; border-radius: 50%; background: #7d909c; color: #fff; font-size: 23px; line-height: 44px; text-align: center; margin-left: 27px; }
.up { margin-left: 26px; }

.page { height: 1474px; display: flex; flex-direction: column; align-items: center; justify-content: flex-start; padding-top: 576px; background: linear-gradient(rgba(60, 80, 90, 0) 1390px, rgba(60, 80, 90, .09)), linear-gradient(90deg, #e0f2f5 0, #b2dfe6 16.700%, #95d2dc 32%, #6cbfcd 50%, #6cbfcd 100%); }
.card { width: 1440px; height: 830px; border-radius: 40px; background: #ebf7f9; display: flex; flex-direction: column; align-items: center; }
h1 { margin: 35px 0 0; height: 104px; font: 700 68px/84px "DejaVu Sans", sans-serif; letter-spacing: 1.300px; word-spacing: -8px; white-space: nowrap; color: #6cbfcf; text-decoration: underline; text-decoration-thickness: 8px; text-underline-offset: 4px; text-decoration-skip-ink: none; text-shadow: -4px 0 #33698f, 4px 0 #33698f, 0 -4px #33698f, 0 4px #33698f, -2px -2px #33698f, 2px 2px #33698f, -2px 2px #33698f, 2px -2px #33698f; }
.field { width: 524px; height: 492px; margin-top: 1px; border: 4px solid #1d63c8; border-radius: 6px; outline: 2px solid #fff; background: #fff; display: flex; flex-direction: column; justify-content: space-between; font-size: 32px; line-height: 40px; letter-spacing: -.75px; color: #757575; padding: 8px 0 0 2px; }
.field svg { align-self: flex-end; }
.btn { width: 316px; height: 76px; border-radius: 8px; background: #49a0b5; color: #fff; margin-top: 12px; font-size: 32px; line-height: 77px; letter-spacing: -.75px; text-align: center; }
.card p { margin: 5px 0 0; font-size: 32px; line-height: 40px; letter-spacing: -.8px; color: #212529; }

.desktop { position: relative; height: 134px; margin-top: -12px; flex: none; display: flex; align-items: flex-end; padding-left: 76px; }
.sea { position: absolute; left: 0; bottom: 0; }
.dock { position: relative; width: 2728px; height: 112px; display: flex; padding: 0 6px; border-radius: 12px 12px 0 0; background: linear-gradient(90deg, #46617f, #455f79 40%, #4c6079 62%, #50647c); }
.dock > svg { width: 94px; height: 112px; overflow: visible; }
.dock text { font-family: Inter, sans-serif; text-anchor: middle; }
.dot { fill: #000; }
.petals rect { mix-blend-mode: multiply; }
.rule { width: 42px; height: 84px; margin-top: 14px; background: linear-gradient(#1c3450, #1c3450) 50% 0 / 2px 100% no-repeat; }
```
